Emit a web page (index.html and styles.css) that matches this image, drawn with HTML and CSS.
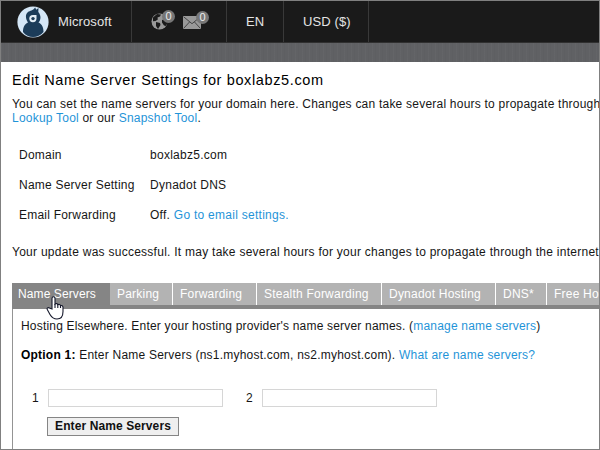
FILE: index.html
```html
<!DOCTYPE html>
<html lang="en">
<head>
<meta charset="utf-8">
<title>Name Server Settings</title>
<link rel="stylesheet" href="styles.css">
</head>
<body>
<div class="window">
  <header class="topbar">
    <div class="account">
      <svg class="avatar" viewBox="0 0 32 32" width="32" height="32">
        <circle cx="16" cy="16" r="15.600" fill="#d4e6f6"/>
        <path d="M6 26c0-4 1-7.500 5-9.500C8.500 13 8 8.500 11 6c2-1.500 4.800-1.300 7.200-4.600l1 2.400L21.500 2l-.2 4c2.900 3.400 2.800 7.500.2 10.500 4 2 5 5.500 5 9.500C21 32.600 11 32.600 6 26z" fill="#1c3c59"/>
        <path d="M12.300 12.600a3.600 3.600 0 0 1 3.600-3.600h3.600v3.600a3.600 3.600 0 1 1-7.200 0z" fill="#e3edf5"/>
        <circle cx="16" cy="12.600" r="1.700" fill="#1c3c59"/>
      </svg>
      <span>Microsoft</span>
    </div>
    <div class="alerts">
      <div class="alert">
        <svg viewBox="0 0 17 17" width="17" height="17">
          <circle cx="8.500" cy="8.500" r="8" fill="#999"/>
          <path d="M2 4.500 6 1l4 .5-1 2-2.500 1 .3 2L4.500 8 2 8.200zM5 9l4 1 .5 2L7 16l-2-3zM11 7l3-1 3 3-2 4-2-.5-2-3z" fill="#1a1a1a"/>
        </svg>
        <span class="badge">0</span>
      </div>
      <div class="alert mail">
        <svg viewBox="0 0 18 13" width="18" height="13">
          <path d="M0 0h18v13H0z" fill="#999"/>
          <path d="m.5.700 8.500 7 8.500-7M.5 12.500l6-6.500m5 0 6 6.500" fill="none" stroke="#454545"/>
        </svg>
        <span class="badge">0</span>
      </div>
    </div>
    <div class="language">EN</div>
    <div class="currency">USD ($)</div>
  </header>
  <div class="strip"></div>
  <main>
    <h1>Edit Name Server Settings for boxlabz5.com</h1>
    <p class="intro">You can set the name servers for your domain here. Changes can take several hours to propagate through<br><a>Lookup Tool</a> or our <a>Snapshot Tool</a>.</p>
    <dl>
      <dt>Domain</dt><dd>boxlabz5.com</dd>
      <dt>Name Server Setting</dt><dd>Dynadot DNS</dd>
      <dt>Email Forwarding</dt><dd>Off. <a>Go to email settings.</a></dd>
    </dl>
    <p class="status">Your update was successful. It may take several hours for your changes to propagate through the internet</p>
    <nav>
      <span class="tab active">Name Servers</span>
      <span class="tab parking">Parking</span>
      <span class="tab forwarding">Forwarding</span>
      <span class="tab stealth">Stealth Forwarding</span>
      <span class="tab hosting">Dynadot Hosting</span>
      <span class="tab dns">DNS*</span>
      <span class="tab free">Free Ho</span>
    </nav>
    <section>
      <p>Hosting Elsewhere. Enter your hosting provider's name server names. (<a>manage name servers</a>)</p>
      <p class="option"><b>Option 1:</b> Enter Name Servers (ns1.myhost.com, ns2.myhost.com). <a>What are name servers?</a></p>
      <div class="fields">
        <label>1</label><input type="text">
        <label class="second">2</label><input type="text">
      </div>
      <button>Enter Name Servers</button>
    </section>
  </main>
</div>
<svg class="cursor" viewBox="0 0 18 24" width="18" height="24">
  <path d="M6 13V2.500c0-2.300 3-2.300 3 0V8c1-.8 2.500-.5 2.800.7 1-.7 2.300-.2 2.700.9 1.300-.5 2.500.3 2.500 1.800v4.100c0 5-2 7.500-6 7.500-3.700 0-5.300-1.500-7-4.500l-2.600-4.700c-1-1.700.8-2.800 2-1.700z" fill="#fff" stroke="#15182b" stroke-width="1.100"/>
  <path d="M9 8v4m2.800-3.200V12m2.700-2.200V12" stroke="#15182b" stroke-width="1.100" fill="none"/>
</svg>
</body>
</html>
```
FILE: styles.css
```css
* { box-sizing: border-box; }
body { margin: 0; position: relative; }
.window {
  width: 600px; height: 450px; overflow: hidden;
  border: 1px solid #808080; background: #fff; color: #161616;
  font: 12px/14px "Liberation Sans", Arial, sans-serif;
  letter-spacing: 0.22px; white-space: nowrap;
}
.topbar {
  display: flex; height: 42px; background: #1a1a1a; color: #e4e4e4;
  font-size: 13px; letter-spacing: 0.1px; border-bottom: 1px solid #303030;
}
.topbar > div { display: flex; align-items: center; border-right: 1px solid #393939; }
.topbar > .account { width: 131px; padding-left: 16px; gap: 9px; }
.alerts { width: 95px; padding-left: 19px; gap: 15px; }
.alert { position: relative; display: flex; }
.mail { padding-top: 1px; }
.badge {
  position: absolute; left: 11px; top: -3px; width: 13px; height: 13px;
  border-radius: 50%; background: #777; color: #eee;
  font-size: 11px; line-height: 13px; text-align: center; letter-spacing: 0;
}
.mail .badge { left: 13px; top: -4px; }
.language { width: 57px; padding-left: 19px; }
.currency { width: 85px; padding-left: 19px; }
.strip {
  height: 19px; background-color: #606164;
  background-image: repeating-linear-gradient(90deg, #ffffff06 0 1px, transparent 1px 3px, #00000006 3px 4px, transparent 4px 7px);
}
main { padding: 10px 0 0 11px; }
h1 { margin: 0; font-size: 14.5px; line-height: 16px; font-weight: normal; color: #000; letter-spacing: 0.63px; }
p { margin: 0; }
a { color: #1f94d8; }
.intro { margin-top: 9px; }
dl { margin: 23px 0 0 7px; display: grid; grid-template-columns: 131px 1fr; row-gap: 16px; }
dd { margin: 0; letter-spacing: 0.27px; }
.status { margin-top: 23px; letter-spacing: 0.26px; }
nav { display: flex; margin-top: 24px; height: 26px; background: linear-gradient(#fff 22px, #858585 22px); }
.tab { flex: none; height: 22px; padding: 4px 0 0 7px; background: #b3b3b3; color: #fff; border-right: 1px solid #fff; }
.active { width: 98px; height: 26px; padding-left: 6px; background: #858585; border-right: 0; letter-spacing: 0.1px; }
.parking { width: 63px; }
.forwarding { width: 84px; }
.stealth { width: 125px; }
.hosting { width: 114px; }
.dns { width: 51px; }
.free { width: 52px; border-right: 0; }
section { height: 160px; padding: 10px 0 0 8px; border-left: 1px solid #949494; }
section p { letter-spacing: 0.19px; }
section .option { margin-top: 15px; letter-spacing: 0.22px; }
.option b { color: #000; }
.fields { display: flex; align-items: center; margin: 27px 0 10px 11px; height: 18px; }
.fields label { width: 16px; }
.fields .second { margin-left: 23px; }
input { width: 175px; height: 18px; padding: 0; border: 1px solid #d6d6d6; background: #fff; }
button {
  display: block; width: 132px; height: 19px; margin-left: 26px; padding: 0;
  border: 1px solid #858585; background: #efefef; color: #111;
  font: bold 12px/15px "Liberation Sans", Arial, sans-serif; letter-spacing: 0.1px;
}
.cursor { position: absolute; left: 46px; top: 296px; }
```
